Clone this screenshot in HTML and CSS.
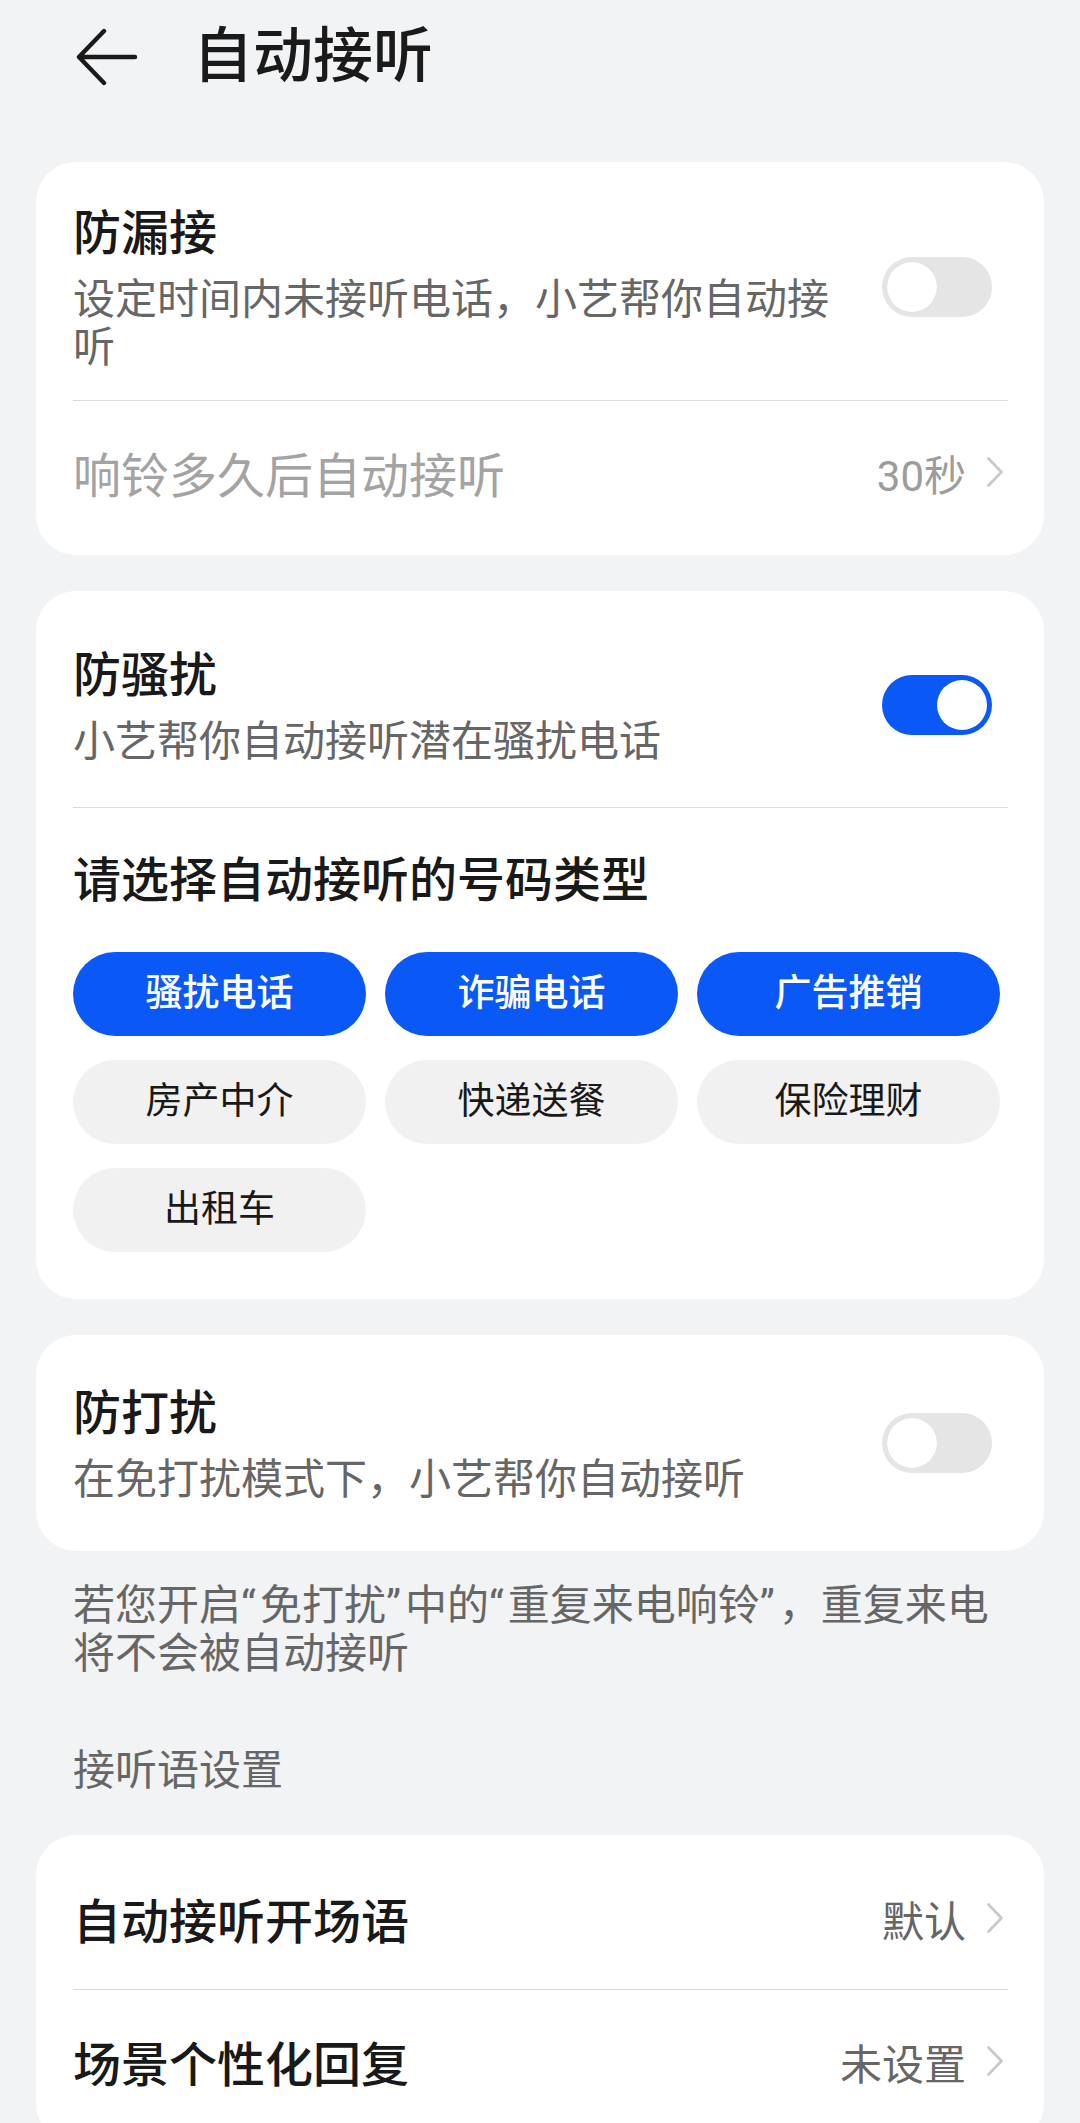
FILE: index.html
```html
<!DOCTYPE html>
<html lang="zh-CN">
<head>
<meta charset="utf-8">
<title>自动接听</title>
<link rel="stylesheet" href="styles.css">
</head>
<body>
<div class="screen">
  <header class="topbar">
    <svg class="back" viewBox="0 0 62 58" aria-hidden="true">
      <path d="M28 3 L3 29 L28 55 M3 29 H59" fill="none" stroke="#1a1a1a" stroke-width="4.4" stroke-linecap="round" stroke-linejoin="round"/>
    </svg>
    <h1 class="page-title">自动接听</h1>
  </header>

  <main class="content">
    <section class="card">
      <div class="switch-row">
        <div class="text">
          <div class="title">防漏接</div>
          <div class="sub">设定时间内未接听电话，小艺帮你自动接听</div>
        </div>
        <span class="toggle"><span class="knob"></span></span>
      </div>
      <div class="link-row is-disabled">
        <span class="label">响铃多久后自动接听</span>
        <span class="value">30秒</span>
        <svg class="chev" viewBox="0 0 18 32" aria-hidden="true"><path d="M2.5 2.5 L15.5 16 L2.5 29.5" fill="none" stroke="#c8c8c8" stroke-width="2.6" stroke-linecap="round" stroke-linejoin="round"/></svg>
      </div>
    </section>

    <section class="card">
      <div class="switch-row">
        <div class="text">
          <div class="title">防骚扰</div>
          <div class="sub">小艺帮你自动接听潜在骚扰电话</div>
        </div>
        <span class="toggle is-on"><span class="knob"></span></span>
      </div>
      <div class="picker">
        <div class="picker-title">请选择自动接听的号码类型</div>
        <div class="chips">
          <span class="chip is-selected">骚扰电话</span>
          <span class="chip is-selected">诈骗电话</span>
          <span class="chip is-selected">广告推销</span>
          <span class="chip">房产中介</span>
          <span class="chip">快递送餐</span>
          <span class="chip">保险理财</span>
          <span class="chip">出租车</span>
        </div>
      </div>
    </section>

    <section class="card card--single">
      <div class="switch-row">
        <div class="text">
          <div class="title">防打扰</div>
          <div class="sub">在免打扰模式下，小艺帮你自动接听</div>
        </div>
        <span class="toggle"><span class="knob"></span></span>
      </div>
    </section>

    <p class="note">若您开启<span class="q">“</span>免打扰<span class="q">”</span>中的<span class="q">“</span>重复来电响铃<span class="q">”</span>，重复来电<br>将不会被自动接听</p>

    <div class="section-label">接听语设置</div>

    <section class="card card--list">
      <div class="link-row">
        <span class="label">自动接听开场语</span>
        <span class="value">默认</span>
        <svg class="chev" viewBox="0 0 18 32" aria-hidden="true"><path d="M2.5 2.5 L15.5 16 L2.5 29.5" fill="none" stroke="#c8c8c8" stroke-width="2.6" stroke-linecap="round" stroke-linejoin="round"/></svg>
      </div>
      <div class="link-row">
        <span class="label">场景个性化回复</span>
        <span class="value">未设置</span>
        <svg class="chev" viewBox="0 0 18 32" aria-hidden="true"><path d="M2.5 2.5 L15.5 16 L2.5 29.5" fill="none" stroke="#c8c8c8" stroke-width="2.6" stroke-linecap="round" stroke-linejoin="round"/></svg>
      </div>
    </section>
  </main>
</div>
</body>
</html>
```

FILE: styles.css
```css
html {
  overflow: hidden;
  background: #f1f3f5;
}

body {
  margin: 0;
  background: #f1f3f5;
  font-family: Roboto, "Noto Sans CJK SC", sans-serif;
  color: #191919;
}

.screen {
  width: 1080px;
}

.topbar {
  height: 114px;
  display: flex;
  align-items: center;
  padding-left: 76px;
}

.back {
  width: 62px;
  height: 58px;
  flex: none;
}

.page-title {
  margin: 0 0 0 55px;
  font-size: 60px;
  line-height: 1;
  font-weight: 500;
  color: #1a1a1a;
}

.content {
  padding: 48px 36px 0;
}

.card {
  background: #ffffff;
  border-radius: 40px;
  padding: 12px 36px 12px 37px;
}

.card + .card {
  margin-top: 36px;
}

.card--single {
  padding-top: 6px;
  padding-bottom: 6px;
}

.switch-row {
  display: flex;
  align-items: center;
  box-sizing: border-box;
  min-height: 204px;
  padding: 28px 0;
}

.text {
  flex: 1;
  min-width: 0;
  padding-right: 40px;
}

.title {
  font-size: 48px;
  line-height: 64px;
  font-weight: 500;
  color: #191919;
}

.sub {
  margin-top: 10px;
  font-size: 42px;
  line-height: 48px;
  color: #666666;
}

.toggle {
  position: relative;
  flex: none;
  width: 110px;
  height: 60px;
  border-radius: 30px;
  background: #e5e5e5;
  margin-right: 16px;
}

.toggle .knob {
  position: absolute;
  top: 5px;
  left: 5px;
  width: 50px;
  height: 50px;
  border-radius: 50%;
  background: #ffffff;
  box-shadow: 0 0 1px rgba(0, 0, 0, 0.08);
}

.toggle.is-on {
  background: #0a59f7;
}

.toggle.is-on .knob {
  left: 55px;
}

.link-row {
  display: flex;
  align-items: center;
  height: 142px;
  border-top: 1px solid #dadada;
}

.card--list .link-row:first-child {
  border-top: none;
}

.label {
  flex: 1;
  font-size: 48px;
  font-weight: 500;
  color: #191919;
}

.value {
  font-size: 42px;
  color: #666666;
}

.is-disabled .label {
  font-weight: 400;
  color: #a3a3a3;
}

.is-disabled .value {
  color: #9c9c9c;
}

.chev {
  flex: none;
  width: 18px;
  height: 32px;
  margin-left: 20px;
  margin-right: 4px;
}

.picker {
  border-top: 1px solid #dadada;
  padding: 41px 0 35px;
}

.picker-title {
  font-size: 48px;
  line-height: 64px;
  font-weight: 500;
  color: #191919;
  margin-bottom: 39px;
}

.chips {
  display: grid;
  grid-template-columns: 293px 293px 303px;
  column-gap: 19px;
  row-gap: 24px;
}

.chip {
  height: 84px;
  line-height: 84px;
  border-radius: 42px;
  text-align: center;
  font-size: 37px;
  font-weight: 400;
  background: #f1f1f1;
  color: #191919;
}

.chip.is-selected {
  background: #0a59f7;
  color: #ffffff;
  font-weight: 500;
}

.note {
  margin: 31px 0 0;
  padding-left: 37px;
  font-size: 42px;
  line-height: 48px;
  color: #666666;
}

.note .q {
  letter-spacing: 4px;
}

.section-label {
  margin-top: 69px;
  padding-left: 37px;
  font-size: 42px;
  line-height: 48px;
  color: #666666;
}

.card--list {
  margin-top: 40px;
}
```
